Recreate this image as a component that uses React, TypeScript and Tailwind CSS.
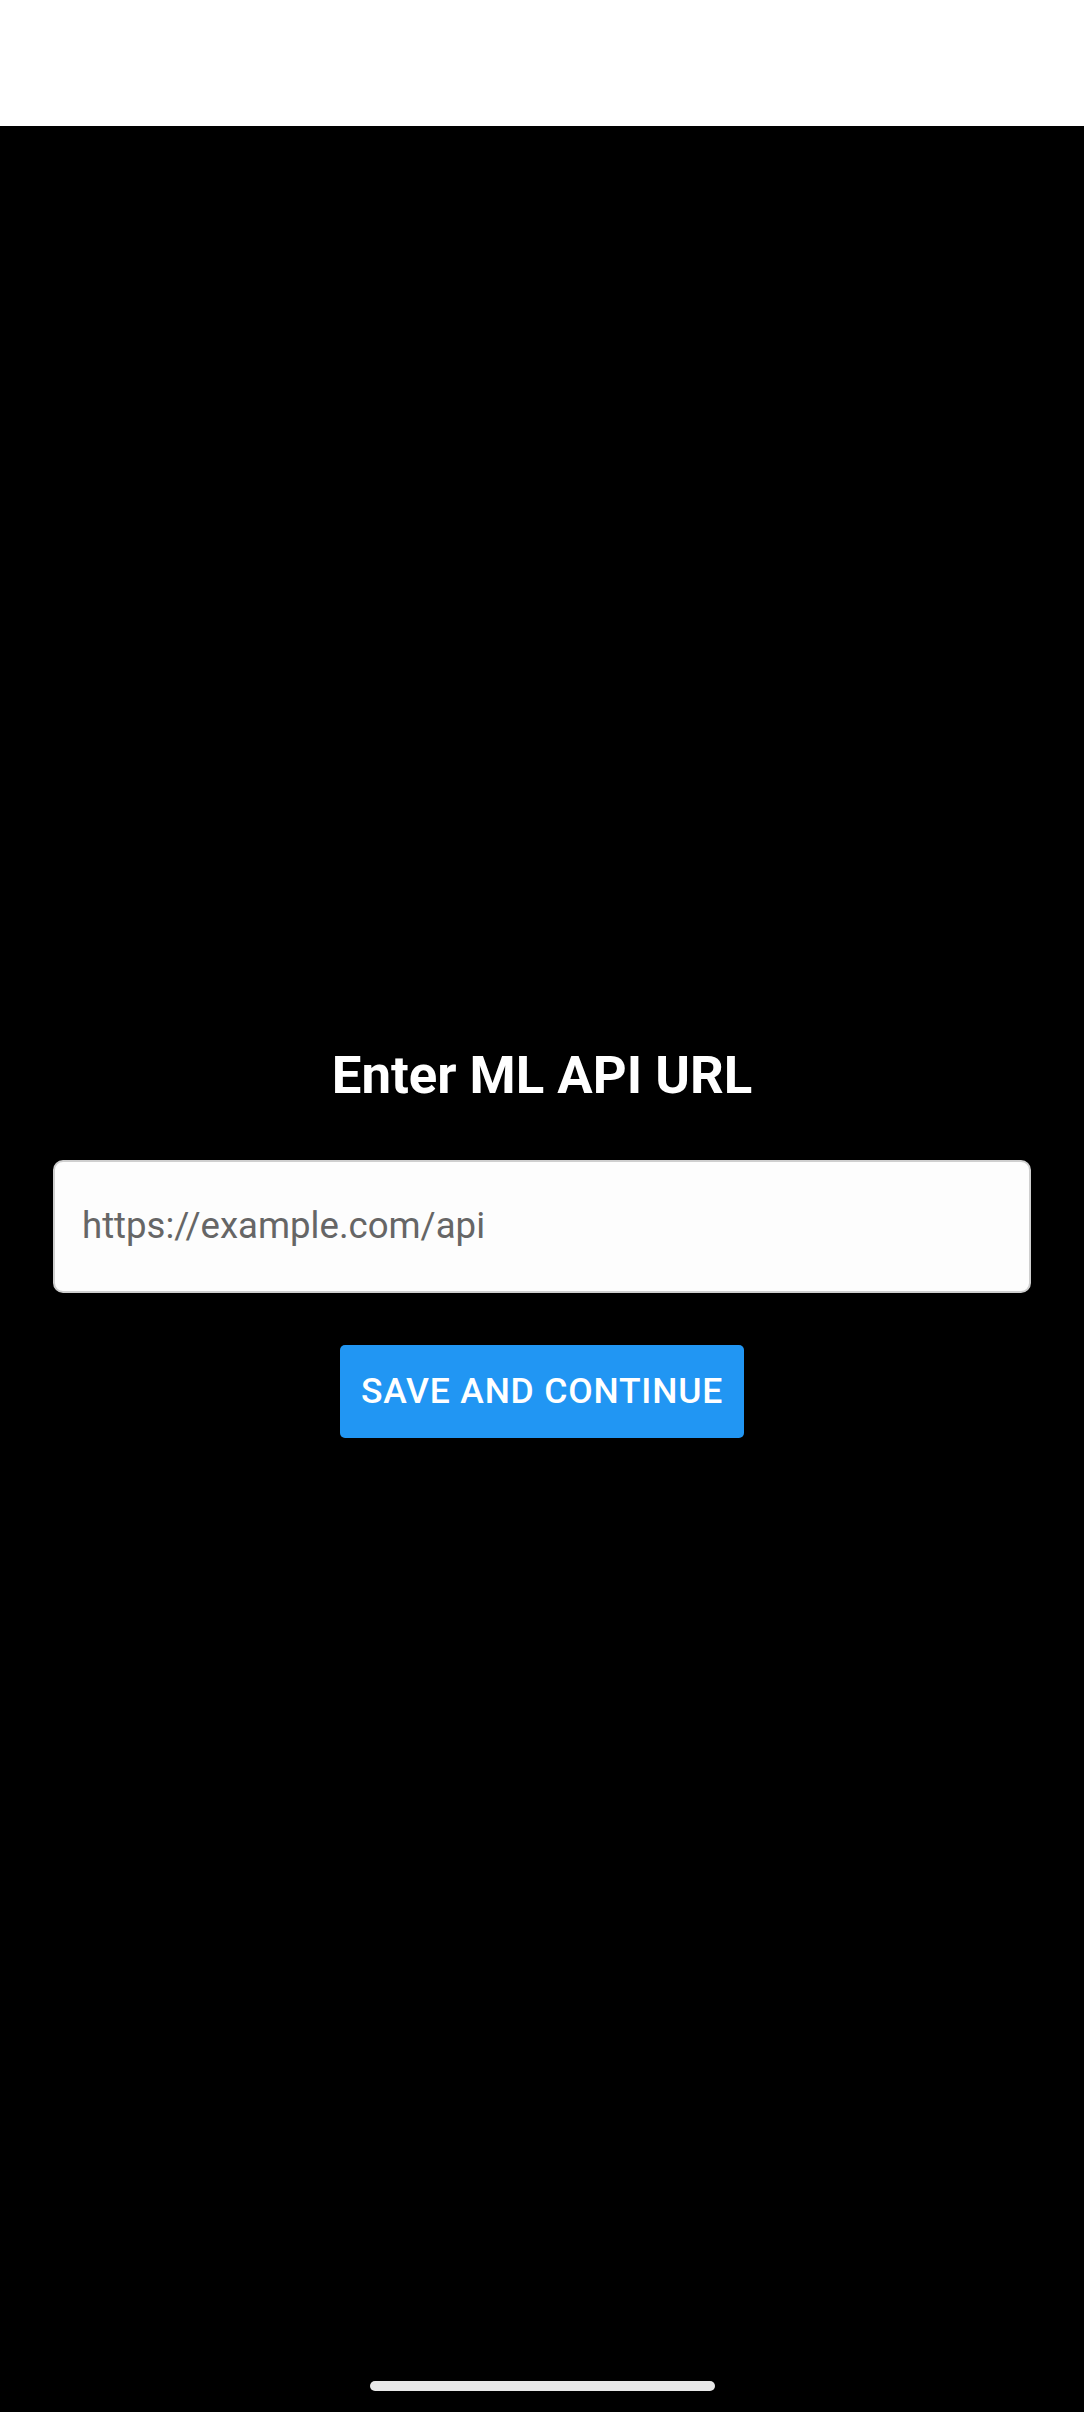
import React from "react";

export default function App() {
  return (
    <div
      className="w-[1084px] h-[2412px] flex flex-col bg-black overflow-hidden"
      style={{ fontFamily: "Roboto, 'Noto Sans', sans-serif" }}
    >
      <div className="h-[126px] bg-white shrink-0" />
      <div className="flex-1 flex flex-col items-center">
        <h1 className="mt-[917px] text-white font-bold text-[52.7px] leading-[64px]">
          Enter ML API URL
        </h1>
        <div className="mt-[53px] w-[978px] h-[133px] rounded-[10px] border-2 border-[#cfcfcf] bg-[#fdfdfd] flex items-center px-[27px]">
          <input
            className="w-full bg-transparent outline-none text-[36.6px] text-[#333] placeholder:text-[#666]"
            placeholder="https://example.com/api"
            style={{ fontFamily: "Roboto, sans-serif" }}
          />
        </div>
        <button className="mt-[52px] h-[93px] w-[404px] rounded-[5px] bg-[#2196f3] text-white text-[35.5px] font-medium tracking-[0.8px]">
          SAVE AND CONTINUE
        </button>
        <div className="mt-auto mb-[21px] w-[345px] h-[10px] rounded-full bg-[#e8e8e8]" />
      </div>
    </div>
  );
}
